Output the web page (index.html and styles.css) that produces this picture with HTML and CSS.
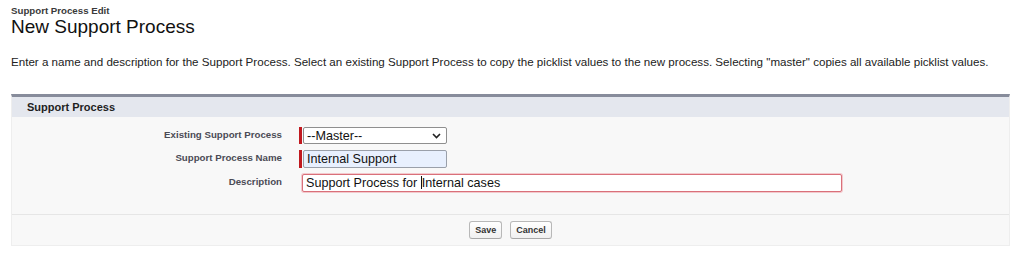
FILE: index.html
```html
<!DOCTYPE html>
<html>
<head>
<meta charset="utf-8">
<link rel="stylesheet" href="styles.css">
</head>
<body>
<div class="page">
  <div class="page-head">
    <div class="crumb">Support Process Edit</div>
    <h1 class="title">New Support Process</h1>
  </div>
  <p class="intro">Enter a name and description for the Support Process. Select an existing Support Process to copy the picklist values to the new process. Selecting "master" copies all available picklist values.</p>
  <div class="panel">
    <div class="panel-head">Support Process</div>
    <div class="panel-body">
      <div class="row">
        <div class="label">Existing Support Process</div>
        <div class="field required">
          <div class="select">
            <span>--Master--</span>
            <svg class="chev" width="9" height="6" viewBox="0 0 9 6"><path d="M1 1 L4.5 4.5 L8 1" fill="none" stroke="#222" stroke-width="1.6"/></svg>
          </div>
        </div>
      </div>
      <div class="row">
        <div class="label">Support Process Name</div>
        <div class="field required">
          <div class="input autofill">Internal Support</div>
        </div>
      </div>
      <div class="row">
        <div class="label">Description</div>
        <div class="field">
          <div class="input wide error">Support Process for <span class="caret"></span>Internal cases</div>
        </div>
      </div>
    </div>
    <div class="panel-foot">
      <button class="btn">Save</button>
      <button class="btn">Cancel</button>
    </div>
  </div>
</div>
</body>
</html>
```

FILE: styles.css
```css
html, body {
  margin: 0;
  padding: 0;
  background: #ffffff;
}
body {
  font-family: "Liberation Sans", Arial, Helvetica, sans-serif;
  color: #1f1f1f;
}
.page {
  padding: 6px 14px 0 11px;
}
.crumb {
  font-size: 9.7px;
  font-weight: bold;
  color: #3a3a3a;
  line-height: 10px;
}
.title {
  margin: 0;
  font-size: 19px;
  font-weight: normal;
  line-height: 21px;
  color: #111;
}
.intro {
  margin: 18px 0 0 0;
  font-size: 11.6px;
  line-height: 13px;
  color: #222;
  white-space: nowrap;
}
.panel {
  margin-top: 26px;
  border-top: 3px solid #878c9b;
  background: #f8f8f8;
  border-left: 1px solid #eeeeee;
  border-right: 1px solid #eeeeee;
  border-bottom: 1px solid #eeeeee;
}
.panel-head {
  height: 20px;
  line-height: 20px;
  background: #e4e7ee;
  padding-left: 15px;
  font-size: 11px;
  font-weight: bold;
  color: #1e1e1e;
}
.panel-body {
  padding: 10px 0 22px 0;
  display: flex;
  flex-direction: column;
  gap: 6px;
}
.row {
  display: flex;
  align-items: flex-start;
}
.label {
  width: 270px;
  text-align: right;
  font-size: 9.7px;
  font-weight: bold;
  color: #4b4b55;
  padding-top: 2px;
  line-height: 11px;
}
.field {
  margin-left: 17px;
  padding-left: 4px;
  display: flex;
}
.field.required {
  border-left: 3px solid #c0191f;
  padding-left: 1px;
}
.select, .input {
  box-sizing: border-box;
  height: 18px;
  width: 144px;
  border: 1px solid #8f8f8f;
  border-radius: 2px;
  background: #ffffff;
  font-size: 12.6px;
  line-height: 16px;
  padding: 0 3px;
  color: #111;
  white-space: nowrap;
}
.select {
  display: flex;
  align-items: center;
  justify-content: space-between;
  height: 17px;
  padding-right: 5px;
}
.input.autofill {
  background: #e8f0fe;
  border-color: #9aa0aa;
}
.input.wide {
  width: 540px;
  margin-left: -1px;
}
.input.error {
  border: 1px solid #d9707a;
  box-shadow: 0 0 0 1px #f3c9cd;
}
.caret {
  display: inline-block;
  width: 1px;
  height: 13px;
  background: #111;
  vertical-align: -2px;
}
.panel-foot {
  border-top: 1px solid #e6e6e6;
  height: 30px;
  display: flex;
  align-items: center;
  justify-content: center;
  gap: 8px;
}
.btn {
  font-family: "Liberation Sans", Arial, sans-serif;
  font-size: 9px;
  font-weight: bold;
  color: #333;
  height: 18px;
  padding: 0 5px;
  border: 1px solid #b8b8b8;
  border-bottom-color: #a8a8a8;
  border-radius: 3px;
  background: linear-gradient(#ffffff, #f0f0f0);
  cursor: pointer;
}
```
